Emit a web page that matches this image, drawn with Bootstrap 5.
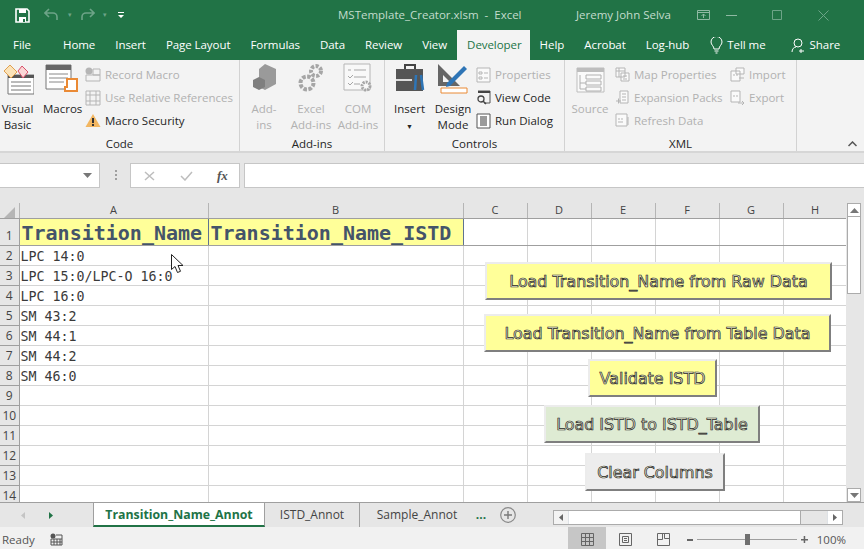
<!DOCTYPE html>
<html lang="en">

<head>
    <meta charset="UTF-8" />
    <meta name="viewport" content="width=device-width, initial-scale=1" />
    <title>MSTemplate_Creator.xlsm - Excel</title>
    <link rel="stylesheet" href="https://cdn.jsdelivr.net/npm/bootstrap@5.3.2/dist/css/bootstrap.min.css">
    <style>
        body {
            font-family: "Open Sans", "Noto Sans", sans-serif;
            font-size: 11.5px;
            background: #e6e6e6;
            color: #262626;
            width: 864px;
            height: 549px;
            overflow: hidden;
        }

        svg { display: block; flex: none; }

        .title-strip { height: 30px; background: #217346; color: #c3dccd; }
        .quick-tools { width: 338px; padding-left: 15px; }
        .qa-drop { width: 19px; text-align: center; color: #6da488; font-size: 7px; }
        .doc-title { width: 238px; white-space: pre; }
        .user-name { width: 121px; }
        .win-ctl { width: 46px; }

        .tab-strip { height: 30px; background: #217346; color: #fff; letter-spacing: -0.06px; }
        .tab-item { padding: 0 10px; line-height: 30px; white-space: nowrap; }
        .tab-active { background: #f3f3f3; color: #217346; padding-right: 8px; }
        .tab-tell { padding-left: 11px; padding-right: 15px; }

        .ribbon-bar { height: 93px; background: #f3f3f3; border-bottom: 2px solid #d6d6d6; }
        .rib-group { height: 91px; border-right: 1px solid #d2d2d2; padding-top: 3px; position: relative; }
        .rib-body { height: 73px; }
        .rib-label { text-align: center; line-height: 16px; }
        .rib-big { text-align: center; line-height: 16px; flex: none; }
        .rib-big svg { margin: 0 auto 6px; }
        .rib-big.rib-short svg { margin-bottom: 8px; }
        .rib-small { line-height: 23px; height: 23px; white-space: nowrap; }
        .rib-off { color: #b1b1b1; }
        .collapse-mark { position: absolute; right: 7px; bottom: 4px; }

        .formula-strip { height: 50px; background: #e6e6e6; padding-top: 10px; }
        .fx-box { height: 25px; background: #fff; border: 1px solid #c6c6c6; }

        .sheet-area { height: 299px; position: relative; }
        .sheet-clip { width: 846px; height: 299px; overflow: hidden; background: #fff; }
        .sheet-grid { table-layout: fixed; width: 847px; }
        .sheet-grid td, .sheet-grid th {
            border: 1px solid #d4d4d4;
            border-width: 0 1px 1px 0;
            padding: 2px 0 0 1px;
            overflow: hidden;
            white-space: nowrap;
            font-family: "DejaVu Sans Mono", monospace;
            font-weight: 400;
            font-size: 13.3px;
            height: 20px;
            line-height: 17px;
            color: #3a3a3a;
        }
        .sheet-grid th {
            background: #e6e6e6;
            font-family: "Open Sans", sans-serif;
            font-size: 11px;
            text-align: center;
            padding: 1px 0 0;
            line-height: 18px;
            color: #444;
            border-color: #9f9f9f;
            border-width: 0 1px 1px 0;
        }
        .sheet-grid thead th { height: 15px; line-height: 14px; padding: 0; border-color: #b5b5b5; border-bottom-color: #9f9f9f; }
        .sheet-grid tbody th { font-size: 12px; }
        .sheet-grid tr.head-row td, .sheet-grid tr.head-row th { height: 27px; border-bottom-color: #9f9f9f; vertical-align: bottom; padding-top: 0; }
        .sheet-grid td.col-head {
            background: #ffff99;
            font-size: 20px;
            line-height: 24px;
            font-weight: 700;
            color: #44546a;
            padding-left: 2px;
            border-right-color: #5f7391;
        }
        .corner-mark { position: absolute; left: 4px; top: 4px; }

        .macro-btn {
            position: absolute;
            height: 38px;
            text-align: center;
            font-family: "DejaVu Sans", sans-serif;
            font-size: 15.9px;
            line-height: 36px;
            color: #eeeed2;
            -webkit-text-stroke: 0.7px #262626;
            white-space: nowrap;
            background: #ffff99;
            border: 2px solid;
            border-color: #ececec #7f7f7f #7f7f7f #ececec;
        }
        .btn-raw { left: 485px; top: 59px; width: 347px; }
        .btn-table { left: 484px; top: 111px; width: 347px; }
        .btn-validate { left: 588px; top: 156px; width: 129px; }
        .btn-load { left: 544px; top: 202px; width: 216px; background: #deebd3; }
        .btn-clear { left: 585px; top: 250px; width: 140px; background: #ededed; }
        .mouse-arrow { position: absolute; left: 171px; top: 51px; }

        .side-scroll { width: 18px; height: 299px; padding: 0 3px 0 1px; background: #e6e6e6; }
        .scroll-btn { height: 14px; background: #fff; border: 1px solid #ababab; }
        .scroll-thumb { height: 77px; background: #fff; border: 1px solid #ababab; border-top: 0; }

        .tabs-strip { height: 25px; background: #e6e6e6; border-top: 1px solid #9f9f9f; color: #444; font-size: 12px; }
        .sheet-nav { width: 93px; padding-left: 21px; }
        .sheet-tab { height: 24px; line-height: 24px; text-align: center; flex: none; }
        .sheet-tab-on {
            width: 172px;
            background: #fff;
            color: #217346;
            font-weight: 700;
            font-size: 12.3px;
            border-bottom: 2px solid #217346;
            border-left: 1px solid #9f9f9f;
            border-right: 1px solid #9f9f9f;
        }
        .sheet-more { color: #217346; font-weight: 700; }
        .hbar { width: 290px; height: 15px; background: #e6e6e6; border: 1px solid #ababab; }
        .hbar-end { width: 15px; background: #f3f3f3; }
        .hbar-thumb { width: 232px; background: #fff; border-right: 1px solid #ababab; }

        .status-strip { height: 22px; background: #f1f1f1; color: #555; }
        .status-low { margin-top: 3px; }
        .view-btn { width: 38px; height: 22px; padding-top: 3px; }
        .view-on { background: #c6c6c6; }
        .zoom-line { width: 100px; height: 1px; background: #9f9f9f; position: relative; }
        .zoom-knob { position: absolute; left: 48px; top: -5px; width: 5px; height: 11px; background: #6f6f6f; }
    </style>
</head>

<body>

    <!-- title bar -->
    <div class="title-strip d-flex align-items-center">
        <div class="quick-tools d-flex align-items-center">
            <svg width="15" height="15" viewBox="0 0 15 15"><path d="M1 1h11l2 2v11H1z" fill="none" stroke="#fff" stroke-width="1.6"/><path d="M4 1h7v4H4zM4 9h7v5H4z" fill="#fff"/><path d="M8 11h2v3H8z" fill="#217346"/></svg>
            <svg style="margin-left:14px" width="16" height="14" viewBox="0 0 16 14"><path d="M5 1L1 5l4 4M1 5h8a4 4 0 0 1 4 4v3" fill="none" stroke="#6da488" stroke-width="1.6"/></svg>
            <span class="qa-drop">▾</span>
            <svg width="16" height="14" viewBox="0 0 16 14"><path d="M11 1l4 4-4 4M15 5H7a4 4 0 0 0-4 4v3" fill="none" stroke="#6da488" stroke-width="1.6"/></svg>
            <span class="qa-drop">▾</span>
            <svg style="margin-left:3px" width="8" height="8" viewBox="0 0 8 8"><path d="M1 1h6v1H1zM1 4h6L4 7z" fill="#fff"/></svg>
        </div>
        <div class="doc-title">MSTemplate_Creator.xlsm  -  Excel</div>
        <div class="user-name">Jeremy John Selva</div>
        <svg width="13" height="10" viewBox="0 0 13 10"><path d="M.5.5h12v9H.5zM.5 2.500h12M6.500 8V4M4.500 6l2-2 2 2" fill="none" stroke="#8fb9a3"/></svg>
        <div class="d-flex ms-auto align-items-center">
            <div class="win-ctl"><svg width="11" height="1" viewBox="0 0 11 1"><path d="M0 0h11v1H0z" fill="#8fb9a3"/></svg></div>
            <div class="win-ctl"><svg width="10" height="10" viewBox="0 0 10 10"><path d="M.5.5h9v9h-9z" fill="none" stroke="#6da488"/></svg></div>
            <div class="win-ctl"><svg width="11" height="11" viewBox="0 0 11 11"><path d="M.5.5l10 10M10.500.5l-10 10" stroke="#6da488"/></svg></div>
        </div>
    </div>

    <!-- ribbon tabs -->
    <div class="tab-strip d-flex">
        <div class="tab-item" style="padding-left:13px;padding-right:22px">File</div>
        <div class="tab-item">Home</div>
        <div class="tab-item">Insert</div>
        <div class="tab-item">Page Layout</div>
        <div class="tab-item">Formulas</div>
        <div class="tab-item">Data</div>
        <div class="tab-item">Review</div>
        <div class="tab-item">View</div>
        <div class="tab-item tab-active">Developer</div>
        <div class="tab-item">Help</div>
        <div class="tab-item">Acrobat</div>
        <div class="tab-item">Log-hub</div>
        <div class="tab-item tab-tell d-flex align-items-center gap-1">
            <svg width="13" height="17" viewBox="0 0 13 17"><path d="M4 12c0-3-3-4-3-7a5.500 5.500 0 0 1 11 0c0 3-3 4-3 7zM4.500 14h4M5.500 16h2" fill="none" stroke="#fff"/></svg>
            Tell me
        </div>
        <div class="tab-item d-flex align-items-center gap-1">
            <svg width="15" height="15" viewBox="0 0 15 15"><circle cx="7" cy="5" r="4" fill="none" stroke="#fff"/><path d="M1 14c0-3 2-5 4-5M10 11v4M8 13h5" fill="none" stroke="#fff"/></svg>
            Share
        </div>
    </div>

    <!-- ribbon -->
    <div class="ribbon-bar d-flex">
        <div class="rib-group" style="width:240px">
            <div class="rib-body d-flex">
                <div class="rib-big" style="width:35px">
                    <svg width="32" height="32" viewBox="0 0 32 32"><path d="M6 12h26v19H6z" fill="#fff" stroke="#777"/><path d="M6 12h26v3H6z" fill="#555"/><path d="M9 19h20M9 23h20M9 27h20" stroke="#777"/><path d="M2 8l6-6 7 7-6 6z" fill="#fbe3b8" stroke="#e0a050"/><path d="M16 8l4-5 6 6-5 6z" fill="#fbd6d6" stroke="#d9506a"/></svg>
                    Visual<br>Basic
                </div>
                <div class="rib-big ms-2" style="width:38px">
                    <svg width="34" height="32" viewBox="0 0 34 32"><path d="M1 2h25v24H1z" fill="#fff" stroke="#777"/><path d="M1 2h25v5H1z" fill="#666"/><path d="M4 11h19M4 15h19M4 19h15" stroke="#888"/><path d="M22 16h10v12H20v-4h2z" fill="#fff" stroke="#ea8a35" stroke-width="2"/></svg>
                    Macros
                </div>
                <div class="ms-1 flex-grow-1">
                    <div class="rib-small rib-off d-flex align-items-center gap-1">
                        <svg width="16" height="15" viewBox="0 0 16 15"><circle cx="4" cy="4" r="3.500" fill="#b5b5b5"/><path d="M1 8h14v6H1zM8 2h7v6H8z" fill="#f3f3f3" stroke="#b5b5b5"/></svg>Record Macro
                    </div>
                    <div class="rib-small rib-off d-flex align-items-center gap-1">
                        <svg width="16" height="16" viewBox="0 0 16 16"><path d="M1 1h14v14H1zM1 5h14M5 1v14M11 1v14M1 11h14" fill="none" stroke="#b5b5b5"/></svg>Use Relative References
                    </div>
                    <div class="rib-small d-flex align-items-center gap-1">
                        <svg width="16" height="15" viewBox="0 0 16 15"><path d="M8 1l7.500 13H.5z" fill="#f2b661"/><path d="M7 5h2v5H7zM7 11h2v2H7z" fill="#333"/></svg>Macro Security
                    </div>
                </div>
            </div>
            <div class="rib-label">Code</div>
        </div>
        <div class="rib-group" style="width:145px">
            <div class="rib-body d-flex rib-off">
                <div class="rib-big rib-short" style="width:48px">
                    <svg width="28" height="30" viewBox="0 0 28 30"><path d="M15 1l11 5v15l-11 6-6-3V6z" fill="#9a9a9a"/><path d="M3 17l6-3 6 3v7l-6 3-6-3z" fill="#7f7f7f"/></svg>
                    Add-<br>ins
                </div>
                <div class="rib-big rib-short" style="width:46px">
                    <svg width="28" height="30" viewBox="0 0 28 30"><circle cx="19" cy="8" r="5" fill="none" stroke="#a6a6a6" stroke-width="4" stroke-dasharray="3 1.500"/><circle cx="10" cy="20" r="6.500" fill="none" stroke="#a6a6a6" stroke-width="4" stroke-dasharray="3.500 1.500"/></svg>
                    Excel<br>Add-ins
                </div>
                <div class="rib-big rib-short" style="width:48px">
                    <svg width="32" height="30" viewBox="0 0 32 30"><path d="M2 1h26v26H2z" fill="#f8f8f8" stroke="#b5b5b5"/><path d="M6 7h3M12 7h12M6 13l2 2 3-3M12 14h12M6 20l2 2 3-3M12 21h6" fill="none" stroke="#a6a6a6"/><circle cx="24" cy="23" r="4" fill="none" stroke="#a6a6a6" stroke-width="3" stroke-dasharray="2 1"/></svg>
                    COM<br>Add-ins
                </div>
            </div>
            <div class="rib-label">Add-ins</div>
        </div>
        <div class="rib-group" style="width:180px">
            <div class="rib-body d-flex">
                <div class="rib-big rib-short" style="width:48px;padding-left:1px">
                    <svg width="30" height="30" viewBox="0 0 30 30"><path d="M10 6V2h10v4" fill="none" stroke="#444" stroke-width="2"/><path d="M1 6h27v22H1z" fill="#555"/><path d="M1 16h16v2H1z" fill="#ddd"/><path d="M21 12l-1 15M26 12l2 15" stroke="#2e75b6" stroke-width="2.500"/></svg>
                    Insert<br><span style="font-size:7px;line-height:10px">▼</span>
                </div>
                <div class="rib-big" style="width:40px">
                    <svg width="32" height="32" viewBox="0 0 32 32"><path d="M1 1v22h22z" fill="#666"/><path d="M6 12v7h7z" fill="#f3f3f3"/><path d="M10 20L27 3l3 3-17 17-4 1z" fill="#2e75b6"/><path d="M4 25h26v5H4z" fill="#fff" stroke="#ea8a35"/></svg>
                    Design<br>Mode
                </div>
                <div class="flex-grow-1" style="padding-left:3px">
                    <div class="rib-small rib-off d-flex align-items-center gap-1">
                        <svg width="15" height="16" viewBox="0 0 15 16"><path d="M1 1h13v14H1z" fill="#fafafa" stroke="#b5b5b5"/><path d="M3 5h3v2H3zM8 6h4M3 10h3v2H3zM8 11h4" fill="none" stroke="#b5b5b5"/></svg>Properties
                    </div>
                    <div class="rib-small d-flex align-items-center gap-1">
                        <svg width="15" height="15" viewBox="0 0 15 15"><path d="M2 1h12v12H8" fill="none" stroke="#555"/><path d="M2 1h12v2H2z" fill="#444"/><circle cx="5" cy="9" r="3" fill="none" stroke="#444" stroke-width="1.300"/><path d="M7 11l3 3" stroke="#444" stroke-width="1.500"/></svg>View Code
                    </div>
                    <div class="rib-small d-flex align-items-center gap-1">
                        <svg width="15" height="16" viewBox="0 0 15 16"><path d="M1 1h13v14H1z" fill="#fff" stroke="#555"/><path d="M4 3h7v10H4z" fill="#9a9a9a"/></svg>Run Dialog
                    </div>
                </div>
            </div>
            <div class="rib-label">Controls</div>
        </div>
        <div class="rib-group" style="width:232px">
            <div class="rib-body d-flex rib-off">
                <div class="rib-big" style="width:50px">
                    <svg class="mt-1" width="29" height="26" viewBox="0 0 29 26"><path d="M1 1h27v24H1z" fill="#fafafa" stroke="#bdbdbd"/><path d="M1 1h27v4H1z" fill="#bdbdbd"/><path d="M10 8h15v4H10zM10 14h15v4H10zM10 20h15v4H10zM4 8v14h6M4 16h6" fill="none" stroke="#b0b0b0"/></svg>
                    <div style="margin-top:8px">Source</div>
                </div>
                <div style="width:115px">
                    <div class="rib-small d-flex align-items-center gap-1">
                        <svg width="15" height="15" viewBox="0 0 15 15"><path d="M1 1h9v9H1zM6 6h8v8H6zM1 4h9M4 1v9M8 9h4M8 12h4" fill="#fafafa" stroke="#b5b5b5"/></svg>Map Properties
                    </div>
                    <div class="rib-small d-flex align-items-center gap-1">
                        <svg width="15" height="15" viewBox="0 0 15 15"><path d="M5 1h8v12H5zM7 4h4M7 7h4M7 10h4M1 11h5M3.500 8.500v5" fill="#fafafa" stroke="#b5b5b5"/></svg>Expansion Packs
                    </div>
                    <div class="rib-small d-flex align-items-center gap-1">
                        <svg width="15" height="15" viewBox="0 0 15 15"><path d="M1 1h11v12H1zM3 6h2M6 6h2M3 9h5M13 4v8" fill="#fafafa" stroke="#b5b5b5"/></svg>Refresh Data
                    </div>
                </div>
                <div>
                    <div class="rib-small d-flex align-items-center gap-1">
                        <svg width="15" height="15" viewBox="0 0 15 15"><path d="M1 4h9v10H1zM6 1h8v6H6zM3 8h2M6 8h2M9 11h5" fill="#fafafa" stroke="#b5b5b5"/></svg>Import
                    </div>
                    <div class="rib-small d-flex align-items-center gap-1">
                        <svg width="15" height="15" viewBox="0 0 15 15"><path d="M1 1h9v11H1zM3 6h2M6 6h2M8 13h6M12 11l2 2-2 2" fill="#fafafa" stroke="#b5b5b5"/></svg>Export
                    </div>
                </div>
            </div>
            <div class="rib-label">XML</div>
        </div>
        <div class="flex-grow-1 position-relative">
            <svg class="collapse-mark" width="9" height="6" viewBox="0 0 9 6"><path d="M.5 5l4-4 4 4" fill="none" stroke="#555" stroke-width="1.500"/></svg>
        </div>
    </div>

    <!-- formula bar -->
    <div class="formula-strip d-flex">
        <div class="fx-box d-flex align-items-center justify-content-end" style="width:100px;border-left:0;padding-right:7px">
            <svg width="9" height="5" viewBox="0 0 9 5"><path d="M0 0h9L4.500 5z" fill="#777"/></svg>
        </div>
        <div class="d-flex align-items-center" style="width:30px;padding-left:15px;height:25px">
            <svg width="2" height="11" viewBox="0 0 2 11"><path d="M0 0h2v2H0zM0 4h2v2H0zM0 8h2v2H0z" fill="#9f9f9f"/></svg>
        </div>
        <div class="fx-box d-flex align-items-center" style="width:110px;padding-left:13px">
            <svg width="11" height="10" viewBox="0 0 11 10"><path d="M1 1l9 8M10 1L1 9" stroke="#bdbdbd" stroke-width="1.500"/></svg>
            <svg style="margin-left:25px" width="13" height="10" viewBox="0 0 13 10"><path d="M1 5l4 4 7-8" fill="none" stroke="#bdbdbd" stroke-width="1.500"/></svg>
            <span class="fst-italic" style="margin-left:24px;font-family:'Liberation Serif',serif;font-size:13px;font-weight:700;color:#555">fx</span>
        </div>
        <div class="fx-box ms-1" style="flex:1;border-right:0"></div>
    </div>

    <!-- sheet -->
    <div class="sheet-area d-flex">
        <div class="sheet-clip">
            <table class="sheet-grid">
                <colgroup>
                    <col style="width:19px"><col style="width:189px"><col style="width:255px">
                    <col style="width:64px"><col style="width:64px"><col style="width:64px">
                    <col style="width:64px"><col style="width:64px"><col style="width:64px">
                </colgroup>
                <thead>
                    <tr><th></th><th>A</th><th>B</th><th>C</th><th>D</th><th>E</th><th>F</th><th>G</th><th>H</th></tr>
                </thead>
                <tbody>
                    <tr class="head-row"><th>1</th><td class="col-head">Transition_Name</td><td class="col-head">Transition_Name_ISTD</td><td></td><td></td><td></td><td></td><td></td><td></td></tr>
                    <tr><th>2</th><td>LPC 14:0</td><td></td><td></td><td></td><td></td><td></td><td></td><td></td></tr>
                    <tr><th>3</th><td>LPC 15:0/LPC-O 16:0</td><td></td><td></td><td></td><td></td><td></td><td></td><td></td></tr>
                    <tr><th>4</th><td>LPC 16:0</td><td></td><td></td><td></td><td></td><td></td><td></td><td></td></tr>
                    <tr><th>5</th><td>SM 43:2</td><td></td><td></td><td></td><td></td><td></td><td></td><td></td></tr>
                    <tr><th>6</th><td>SM 44:1</td><td></td><td></td><td></td><td></td><td></td><td></td><td></td></tr>
                    <tr><th>7</th><td>SM 44:2</td><td></td><td></td><td></td><td></td><td></td><td></td><td></td></tr>
                    <tr><th>8</th><td>SM 46:0</td><td></td><td></td><td></td><td></td><td></td><td></td><td></td></tr>
                    <tr><th>9</th><td></td><td></td><td></td><td></td><td></td><td></td><td></td><td></td></tr>
                    <tr><th>10</th><td></td><td></td><td></td><td></td><td></td><td></td><td></td><td></td></tr>
                    <tr><th>11</th><td></td><td></td><td></td><td></td><td></td><td></td><td></td><td></td></tr>
                    <tr><th>12</th><td></td><td></td><td></td><td></td><td></td><td></td><td></td><td></td></tr>
                    <tr><th>13</th><td></td><td></td><td></td><td></td><td></td><td></td><td></td><td></td></tr>
                    <tr><th>14</th><td></td><td></td><td></td><td></td><td></td><td></td><td></td><td></td></tr>
                </tbody>
            </table>
        </div>
        <svg class="corner-mark" width="11" height="11" viewBox="0 0 11 11"><path d="M11 0v11H0z" fill="#b5b5b5"/></svg>

        <!-- macro buttons float over the cells -->
        <div class="macro-btn btn-raw">Load Transition_Name from Raw Data</div>
        <div class="macro-btn btn-table">Load Transition_Name from Table Data</div>
        <div class="macro-btn btn-validate">Validate ISTD</div>
        <div class="macro-btn btn-load">Load ISTD to ISTD_Table</div>
        <div class="macro-btn btn-clear">Clear Columns</div>
        <svg class="mouse-arrow" width="13" height="20" viewBox="0 0 13 20"><path d="M.5.5v15l3.500-3 2.500 6 3-1.200-2.500-5.800h5z" fill="#fff" stroke="#222"/></svg>

        <div class="side-scroll d-flex flex-column">
            <div class="scroll-btn d-flex align-items-center justify-content-center">
                <svg width="9" height="5" viewBox="0 0 9 5"><path d="M4.500 0L9 5H0z" fill="#777"/></svg>
            </div>
            <div class="scroll-thumb"></div>
            <div class="scroll-btn d-flex align-items-center justify-content-center mt-auto">
                <svg width="9" height="5" viewBox="0 0 9 5"><path d="M0 0h9L4.500 5z" fill="#777"/></svg>
            </div>
        </div>
    </div>

    <!-- sheet tabs -->
    <div class="tabs-strip d-flex align-items-start">
        <div class="sheet-nav d-flex align-items-center gap-5" style="height:24px">
            <svg width="4" height="7" viewBox="0 0 4 7"><path d="M4 0v7L0 3.500z" fill="#c4c4c4"/></svg>
            <svg style="margin-left:-24px" width="4" height="7" viewBox="0 0 4 7"><path d="M0 0v7l4-3.500z" fill="#217346"/></svg>
        </div>
        <div class="sheet-tab sheet-tab-on">Transition_Name_Annot</div>
        <div class="sheet-tab" style="width:95px;border-right:1px solid #9f9f9f">ISTD_Annot</div>
        <div class="sheet-tab" style="width:114px">Sample_Annot</div>
        <div class="sheet-tab sheet-more" style="width:14px">...</div>
        <svg style="margin:4px 0 0 12px" width="16" height="16" viewBox="0 0 16 16"><circle cx="8" cy="8" r="7.300" fill="none" stroke="#8a8a8a" stroke-width="1.200"/><path d="M4 8h8M8 4v8" stroke="#7a7a7a" stroke-width="1.400"/></svg>
        <div class="hbar d-flex" style="margin:7px 0 0 37px">
            <div class="hbar-end d-flex align-items-center justify-content-center border-end">
                <svg width="4" height="7" viewBox="0 0 4 7"><path d="M4 0v7L0 3.500z" fill="#666"/></svg>
            </div>
            <div class="hbar-thumb"></div>
            <div class="hbar-end d-flex align-items-center justify-content-center bg-white border-start ms-auto">
                <svg width="4" height="7" viewBox="0 0 4 7"><path d="M0 0v7l4-3.500z" fill="#666"/></svg>
            </div>
        </div>
    </div>

    <!-- status bar -->
    <div class="status-strip d-flex align-items-center">
        <span class="status-low" style="width:50px;padding-left:2px">Ready</span>
        <svg class="status-low" width="13" height="13" viewBox="0 0 13 13"><circle cx="3" cy="3" r="2.500" fill="#555"/><path d="M1 6h11v6H1zM1 9h11M4 6v6M7 6v6M10 6v6M6 2h6v4" fill="none" stroke="#555"/></svg>
        <div class="view-btn view-on d-flex align-items-center justify-content-center" style="margin-left:505px">
            <svg width="13" height="13" viewBox="0 0 13 13"><path d="M.5.5h12v12H.5zM.5 4.500h12M.5 8.500h12M4.500.5v12M8.500.5v12" fill="none" stroke="#666"/></svg>
        </div>
        <div class="view-btn d-flex align-items-center justify-content-center">
            <svg width="13" height="13" viewBox="0 0 13 13"><path d="M.5.5h12v12H.5zM3.500 3.500h6v6h-6zM5 5.500h3M5 7.500h3" fill="none" stroke="#666"/></svg>
        </div>
        <div class="view-btn d-flex align-items-center justify-content-center">
            <svg width="13" height="13" viewBox="0 0 13 13"><path d="M.5.5h12v12H.5zM7.500.5v5h5M5.500.5v6h-5" fill="none" stroke="#666"/></svg>
        </div>
        <span class="status-low" style="width:6px;height:2px;background:#666;margin-left:5px"></span>
        <div class="zoom-line status-low ms-1"><div class="zoom-knob"></div></div>
        <svg class="ms-1 status-low" width="7" height="7" viewBox="0 0 7 7"><path d="M0 3h7v1.500H0zM2.700 0h1.500v7H2.700z" fill="#666"/></svg>
        <span class="ms-auto status-low" style="margin-right:18px">100%</span>
    </div>

    <script src="https://cdn.jsdelivr.net/npm/bootstrap@5.3.2/dist/js/bootstrap.bundle.min.js"></script>
</body>

</html>
